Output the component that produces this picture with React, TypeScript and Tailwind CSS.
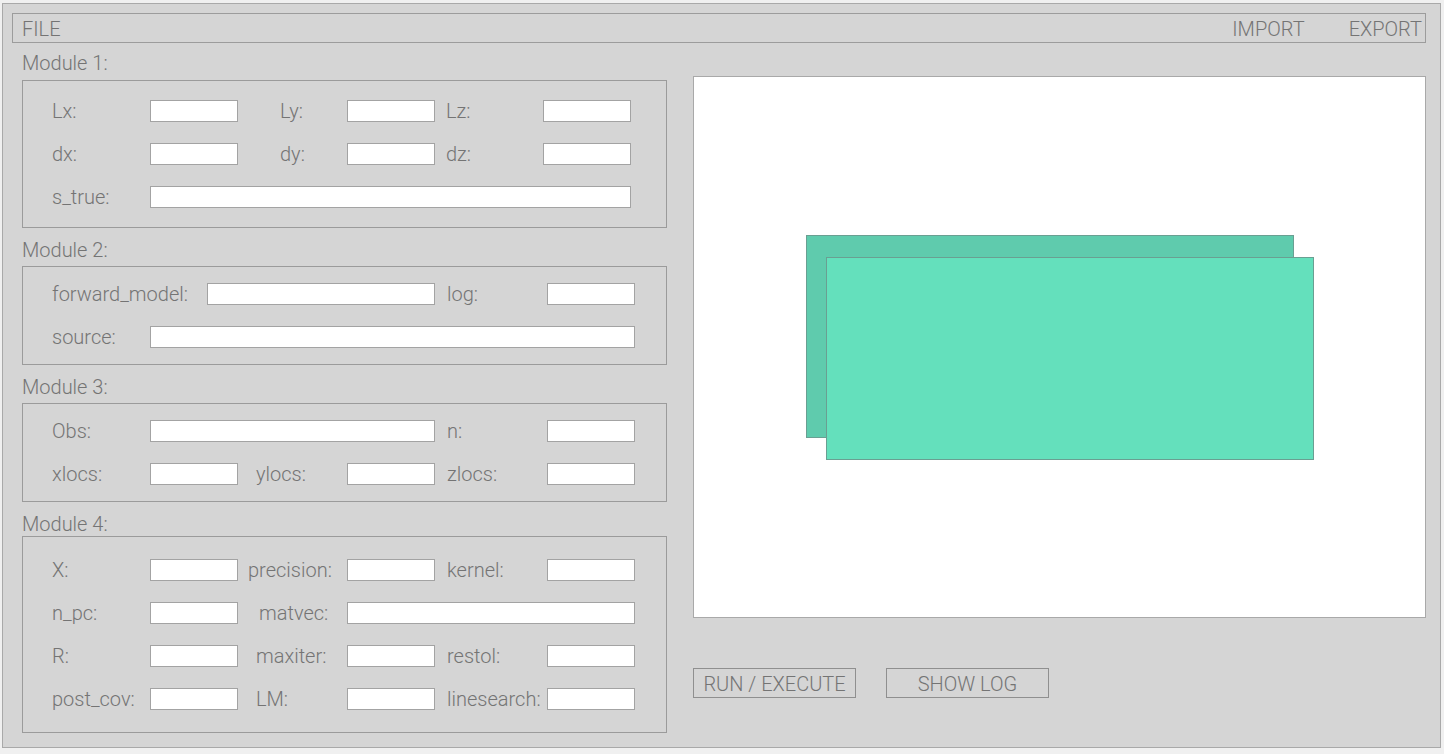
import type { ReactNode } from 'react'

function Lbl({ className = '', children }: { className?: string; children: ReactNode }) {
  return <div className={`shrink-0 whitespace-nowrap leading-[22px] ${className}`}>{children}</div>
}

function Field({ className = 'w-[88px]' }: { className?: string }) {
  return (
    <input
      type="text"
      readOnly
      className={`block h-[22px] shrink-0 border border-[#a3a3a3] bg-white outline-none ${className}`}
    />
  )
}

function Row({ children }: { children: ReactNode }) {
  return <div className="flex h-[22px] items-center">{children}</div>
}

function Module({
  title,
  labelClass,
  boxClass,
  children,
}: {
  title: string
  labelClass: string
  boxClass: string
  children: ReactNode
}) {
  return (
    <>
      <div className={`h-[24px] leading-[24px] ${labelClass}`}>{title}</div>
      <div className={`flex flex-col gap-[21px] border border-[#9b9b9b] pl-[29px] ${boxClass}`}>
        {children}
      </div>
    </>
  )
}

function App() {
  return (
    <div className="h-[754px] w-[1444px] overflow-hidden bg-[#f0f0f0] pl-[2px] pt-[3px] font-[Roboto,'Liberation_Sans',sans-serif] text-[20px] font-light text-[#747474]">
      <div className="h-[745px] w-[1439px] border border-[#a9a9a9] bg-[#d5d5d5] pl-[9px] pt-[9px]">
        {/* menu bar */}
        <div className="flex h-[30px] w-[1414px] items-center justify-between border border-[#9c9c9c] pl-[9px] pr-[3px] pt-[2px]">
          <span>FILE</span>
          <div className="flex gap-[44px]">
            <span>IMPORT</span>
            <span>EXPORT</span>
          </div>
        </div>

        <div className="flex">
          {/* left: modules */}
          <div className="ml-[10px] flex w-[645px] flex-col">
            <Module title="Module 1:" labelClass="mt-[8px]" boxClass="mt-[5px] pt-[19px] pb-[19px]">
              <Row>
                <Lbl className="w-[98px]">Lx:</Lbl>
                <Field />
                <Lbl className="w-[109px] pl-[42px]">Ly:</Lbl>
                <Field />
                <Lbl className="w-[108px] pl-[11px]">Lz:</Lbl>
                <Field />
              </Row>
              <Row>
                <Lbl className="w-[98px]">dx:</Lbl>
                <Field />
                <Lbl className="w-[109px] pl-[42px]">dy:</Lbl>
                <Field />
                <Lbl className="w-[108px] pl-[11px]">dz:</Lbl>
                <Field />
              </Row>
              <Row>
                <Lbl className="w-[98px]">s_true:</Lbl>
                <Field className="w-[481px]" />
              </Row>
            </Module>

            <Module title="Module 2:" labelClass="mt-[10px]" boxClass="mt-[4px] pt-[16px] pb-[16px]">
              <Row>
                <Lbl className="w-[155px]">forward_model:</Lbl>
                <Field className="w-[228px]" />
                <Lbl className="w-[112px] pl-[12px]">log:</Lbl>
                <Field />
              </Row>
              <Row>
                <Lbl className="w-[98px]">source:</Lbl>
                <Field className="w-[485px]" />
              </Row>
            </Module>

            <Module title="Module 3:" labelClass="mt-[10px]" boxClass="mt-[4px] pt-[16px] pb-[16px]">
              <Row>
                <Lbl className="w-[98px]">Obs:</Lbl>
                <Field className="w-[285px]" />
                <Lbl className="w-[112px] pl-[12px]">n:</Lbl>
                <Field />
              </Row>
              <Row>
                <Lbl className="w-[98px]">xlocs:</Lbl>
                <Field />
                <Lbl className="w-[109px] pl-[18px]">ylocs:</Lbl>
                <Field />
                <Lbl className="w-[112px] pl-[12px]">zlocs:</Lbl>
                <Field />
              </Row>
            </Module>

            <Module title="Module 4:" labelClass="mt-[10px]" boxClass="pt-[22px] pb-[22px]">
              <Row>
                <Lbl className="w-[98px]">X:</Lbl>
                <Field />
                <Lbl className="w-[109px] pl-[10px]">precision:</Lbl>
                <Field />
                <Lbl className="w-[112px] pl-[12px]">kernel:</Lbl>
                <Field />
              </Row>
              <Row>
                <Lbl className="w-[98px]">n_pc:</Lbl>
                <Field />
                <Lbl className="w-[109px] pl-[21px]">matvec:</Lbl>
                <Field className="w-[288px]" />
              </Row>
              <Row>
                <Lbl className="w-[98px]">R:</Lbl>
                <Field />
                <Lbl className="w-[109px] pl-[18px]">maxiter:</Lbl>
                <Field />
                <Lbl className="w-[112px] pl-[12px]">restol:</Lbl>
                <Field />
              </Row>
              <Row>
                <Lbl className="w-[98px]">post_cov:</Lbl>
                <Field />
                <Lbl className="w-[109px] pl-[18px]">LM:</Lbl>
                <Field />
                <Lbl className="w-[112px] pl-[12px]">linesearch:</Lbl>
                <Field />
              </Row>
            </Module>
          </div>

          {/* right: canvas + actions */}
          <div className="ml-[26px] flex w-[733px] flex-col">
            <div className="mt-[33px] h-[542px] border border-[#a9a9a9] bg-white">
              <svg width="731" height="540" viewBox="0 0 731 540" className="block">
                <rect x="112.5" y="158.5" width="487" height="202" fill="#5fcbad" stroke="#6a9f92" strokeWidth="1" />
                <rect x="132.5" y="180.5" width="487" height="202" fill="#64e0bc" stroke="#6a9f92" strokeWidth="1" />
              </svg>
            </div>
            <div className="mt-[50px] flex gap-[30px]">
              <button className="h-[30px] w-[163px] whitespace-nowrap border border-[#8f8f8f] text-[#747474]">
                RUN / EXECUTE
              </button>
              <button className="h-[30px] w-[163px] whitespace-nowrap border border-[#8f8f8f] text-[#747474]">
                SHOW LOG
              </button>
            </div>
          </div>
        </div>
      </div>
    </div>
  )
}

export default App
